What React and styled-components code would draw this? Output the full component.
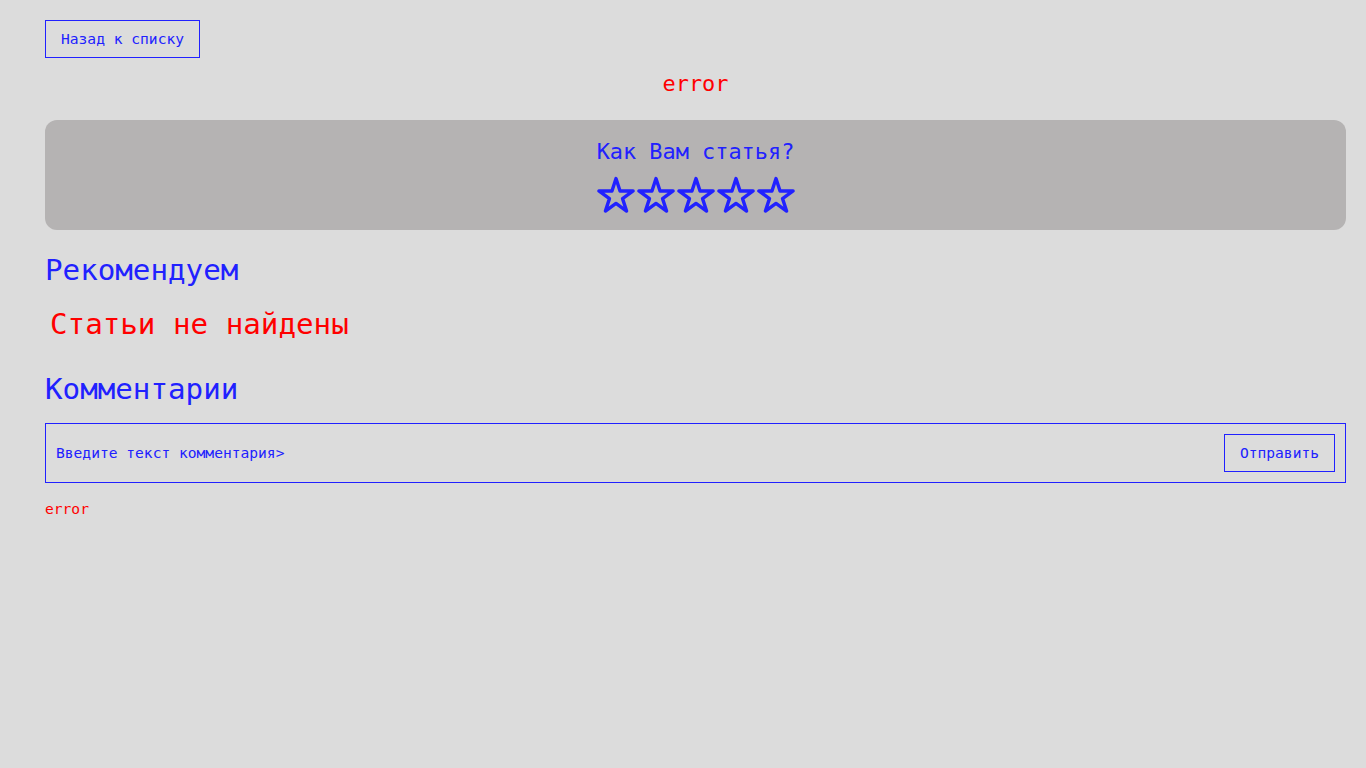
import React from 'react';
import styled, { createGlobalStyle } from 'styled-components';

const GlobalStyle = createGlobalStyle`
    * {
        box-sizing: border-box;
    }
    body {
        margin: 0;
        background: #dcdcdc;
        font-family: "DejaVu Sans Mono", "Liberation Mono", monospace;
        color: #2121ff;
    }
`;

const Page = styled.main`
    min-height: 768px;
    padding: 20px 20px 20px 45px;
    display: flex;
    flex-direction: column;
    align-items: stretch;
`;

const Button = styled.button`
    font-family: inherit;
    font-size: 14.6px;
    line-height: 24px;
    color: #2121ff;
    background: transparent;
    border: 1px solid #2121ff;
    padding: 6px 15px;
    cursor: pointer;
    flex-shrink: 0;
`;

const BackButton = styled(Button)`
    align-self: flex-start;
`;

const ErrorText = styled.p`
    margin: ${p => p.$big ? '10px 0 0' : '14px 0 0'};
    color: #ff0000;
    font-size: ${p => p.$big ? '21.9px' : '14.6px'};
    line-height: ${p => p.$big ? '32px' : '24px'};
    text-align: ${p => p.$big ? 'center' : 'left'};
`;

const RatingCard = styled.section`
    margin-top: 20px;
    background: #b5b3b3;
    border-radius: 12px;
    padding: 16px 16px 14px;
    display: flex;
    flex-direction: column;
    align-items: center;
    gap: 8px;
`;

const CardTitle = styled.h3`
    margin: 0;
    font-weight: normal;
    font-size: 21.9px;
    line-height: 32px;
`;

const Stars = styled.div`
    display: flex;
    height: 40px;
`;

const StarButton = styled.span`
    width: 40px;
    height: 40px;
    display: flex;
    align-items: center;
    justify-content: center;
    cursor: pointer;
`;

const Title = styled.h2`
    margin: ${p => p.$top || '0'} 0 0;
    font-weight: normal;
    font-size: 29.2px;
    line-height: 40px;
    color: ${p => p.$error ? '#ff0000' : '#2121ff'};
    padding-left: ${p => p.$error ? '5px' : '0'};
`;

const CommentForm = styled.form`
    margin-top: 14px;
    border: 1px solid #2121ff;
    padding: 10px;
    display: flex;
    align-items: center;
    justify-content: space-between;
    gap: 16px;
`;

const CommentInput = styled.input`
    flex: 1;
    background: transparent;
    border: none;
    outline: none;
    font-family: inherit;
    font-size: 14.6px;
    line-height: 24px;
    color: #2121ff;
    padding: 0;

    &::placeholder {
        color: #2121ff;
        opacity: 1;
    }
`;

const Star = () => (
    <svg width="40" height="40" viewBox="0 0 40 40" fill="none">
        <path
            d="M20 2.5 L24.04 14.93 L37.12 14.94 L26.54 22.63 L30.58 35.06 L20 27.38 L9.42 35.06 L13.46 22.63 L2.88 14.94 L15.96 14.93 Z"
            stroke="#2121ff"
            strokeWidth="3.4"
            strokeLinejoin="round"
        />
    </svg>
);

const App = () => {
    return (
        <>
            <GlobalStyle />
            <Page>
                <BackButton>Назад к списку</BackButton>
                <ErrorText $big>error</ErrorText>
                <RatingCard>
                    <CardTitle>Как Вам статья?</CardTitle>
                    <Stars>
                        {[1, 2, 3, 4, 5].map(n => (
                            <StarButton key={n}><Star /></StarButton>
                        ))}
                    </Stars>
                </RatingCard>
                <Title $top="20px">Рекомендуем</Title>
                <Title $top="14px" $error>Статьи не найдены</Title>
                <Title $top="25px">Комментарии</Title>
                <CommentForm onSubmit={e => e.preventDefault()}>
                    <CommentInput placeholder="Введите текст комментария>" />
                    <Button type="submit">Отправить</Button>
                </CommentForm>
                <ErrorText>error</ErrorText>
            </Page>
        </>
    );
};

export default App;
